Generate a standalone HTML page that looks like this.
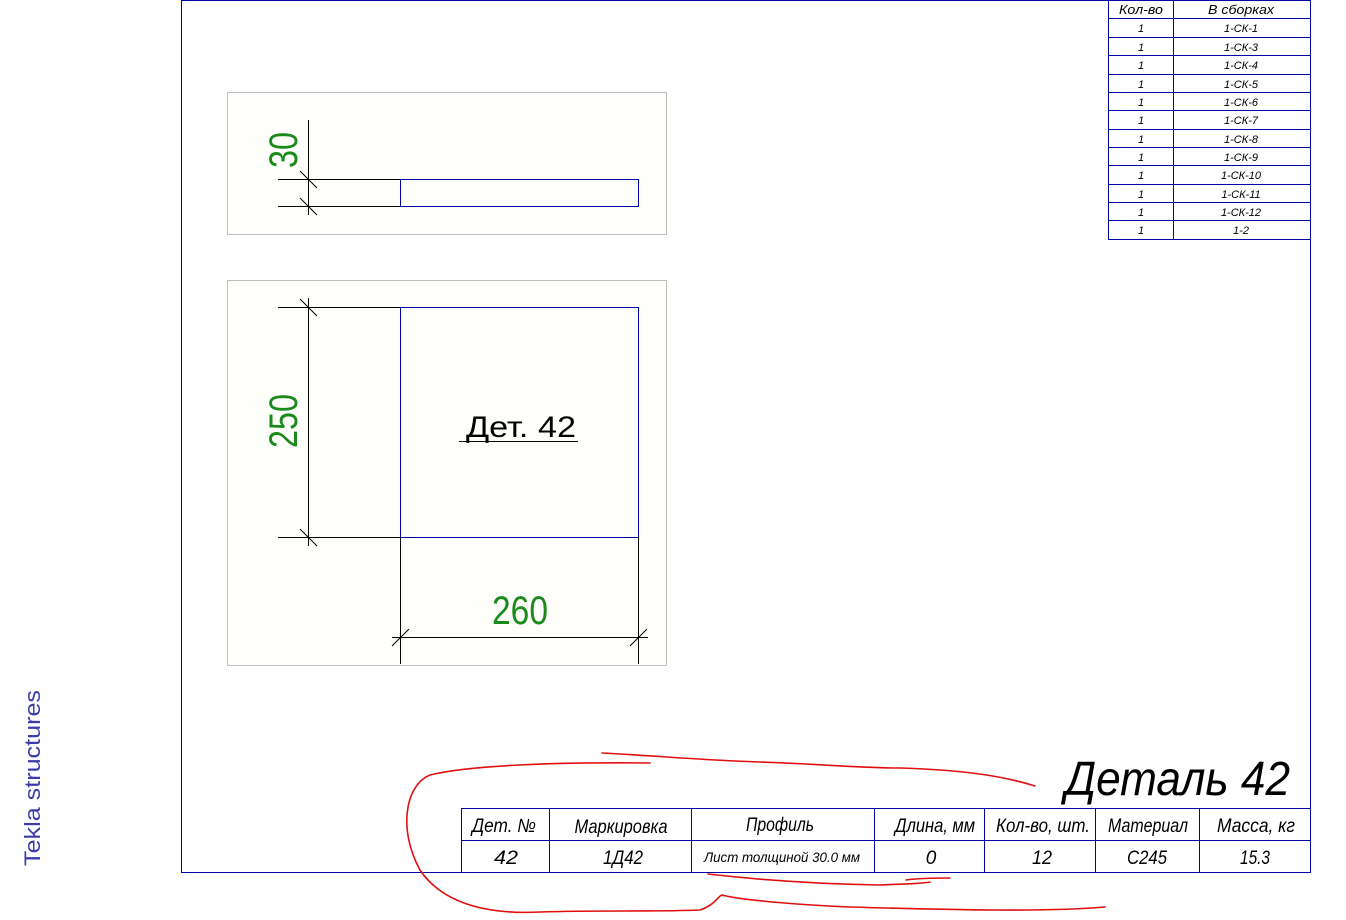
<!DOCTYPE html>
<html><head><meta charset="utf-8"><style>
html,body{margin:0;padding:0;background:#fff;width:1346px;height:920px;overflow:hidden}
svg{display:block}
text{font-family:"Liberation Sans",sans-serif}
.i{font-style:italic}
</style></head><body>
<svg width="1346" height="920" viewBox="0 0 1346 920" xmlns="http://www.w3.org/2000/svg">
<rect width="1346" height="920" fill="#fff"/>
<!-- frame -->
<rect x="181.5" y="0.5" width="1129" height="872" fill="none" stroke="#0000a8" stroke-width="1"/>
<!-- right table -->
<g stroke="#0000a8" stroke-width="1" fill="none">
<line x1="1108.5" y1="0" x2="1108.5" y2="239.5"/>
<line x1="1173.5" y1="0" x2="1173.5" y2="239.5"/>
<line x1="1108" y1="18.5" x2="1310" y2="18.5"/><line x1="1108" y1="37.5" x2="1310" y2="37.5"/>
<line x1="1108" y1="55.5" x2="1310" y2="55.5"/><line x1="1108" y1="74.5" x2="1310" y2="74.5"/>
<line x1="1108" y1="92.5" x2="1310" y2="92.5"/><line x1="1108" y1="110.5" x2="1310" y2="110.5"/>
<line x1="1108" y1="129.5" x2="1310" y2="129.5"/><line x1="1108" y1="147.5" x2="1310" y2="147.5"/>
<line x1="1108" y1="165.5" x2="1310" y2="165.5"/><line x1="1108" y1="184.5" x2="1310" y2="184.5"/>
<line x1="1108" y1="202.5" x2="1310" y2="202.5"/><line x1="1108" y1="220.5" x2="1310" y2="220.5"/>
<line x1="1108" y1="239.5" x2="1310" y2="239.5"/>
</g>
<g class="i" font-size="13" fill="#000" text-anchor="middle" font-style="italic">
<text x="1141" y="14" textLength="44" lengthAdjust="spacingAndGlyphs">Кол-во</text>
<text x="1241" y="14" textLength="66" lengthAdjust="spacingAndGlyphs">В сборках</text>
</g>
<g font-size="11" fill="#000" text-anchor="middle" font-style="italic">
<text x="1141" y="32">1</text><text x="1241" y="32">1-СК-1</text>
<text x="1141" y="51">1</text><text x="1241" y="51">1-СК-3</text>
<text x="1141" y="69">1</text><text x="1241" y="69">1-СК-4</text>
<text x="1141" y="88">1</text><text x="1241" y="88">1-СК-5</text>
<text x="1141" y="106">1</text><text x="1241" y="106">1-СК-6</text>
<text x="1141" y="124">1</text><text x="1241" y="124">1-СК-7</text>
<text x="1141" y="143">1</text><text x="1241" y="143">1-СК-8</text>
<text x="1141" y="161">1</text><text x="1241" y="161">1-СК-9</text>
<text x="1141" y="179">1</text><text x="1241" y="179">1-СК-10</text>
<text x="1141" y="198">1</text><text x="1241" y="198">1-СК-11</text>
<text x="1141" y="216">1</text><text x="1241" y="216">1-СК-12</text>
<text x="1141" y="234">1</text><text x="1241" y="234">1-2</text>
</g>
<!-- view 1 -->
<rect x="227.5" y="92.5" width="439" height="142" fill="#fefefb" stroke="#c0c0c0"/>
<rect x="400.5" y="179.5" width="238" height="27" fill="none" stroke="#0000a8"/>
<g stroke="#000" stroke-width="1">
<line x1="278" y1="179.5" x2="400" y2="179.5"/><line x1="278" y1="206.5" x2="400" y2="206.5"/>
<line x1="308.5" y1="120" x2="308.5" y2="215"/>
<line x1="300" y1="171" x2="317" y2="188"/><line x1="300" y1="198" x2="317" y2="215"/>
</g>
<text x="297" y="150" font-size="40" fill="#1a8a1a" text-anchor="middle" transform="rotate(-90 297 150)" textLength="36" lengthAdjust="spacingAndGlyphs">30</text>
<!-- view 2 -->
<rect x="227.5" y="280.5" width="439" height="385" fill="#fefefb" stroke="#c0c0c0"/>
<rect x="400.5" y="307.5" width="238" height="230" fill="none" stroke="#0000a8"/>
<g stroke="#000" stroke-width="1">
<line x1="278" y1="307.5" x2="400" y2="307.5"/><line x1="278" y1="537.5" x2="400" y2="537.5"/>
<line x1="308.5" y1="298" x2="308.5" y2="546"/>
<line x1="300" y1="299" x2="317" y2="316"/><line x1="300" y1="529" x2="317" y2="546"/>
<line x1="400.5" y1="537" x2="400.5" y2="664"/><line x1="638.5" y1="537" x2="638.5" y2="664"/>
<line x1="392" y1="637.5" x2="648" y2="637.5"/>
<line x1="392" y1="646" x2="409" y2="629"/><line x1="630" y1="646" x2="647" y2="629"/>
<line x1="459" y1="441.5" x2="578" y2="441.5"/>
</g>
<text x="297" y="421" font-size="40" fill="#1a8a1a" text-anchor="middle" transform="rotate(-90 297 421)" textLength="54" lengthAdjust="spacingAndGlyphs">250</text>
<text x="520" y="624" font-size="40" fill="#1a8a1a" text-anchor="middle" textLength="56" lengthAdjust="spacingAndGlyphs">260</text>
<text x="466" y="437" font-size="30" fill="#000" textLength="110" lengthAdjust="spacingAndGlyphs">Дет.  42</text>
<!-- title -->
<text x="1065" y="795" font-size="48" fill="#000" font-style="italic" textLength="225" lengthAdjust="spacingAndGlyphs">Деталь 42</text>
<!-- bottom table -->
<g stroke="#0000a8" stroke-width="1" fill="none">
<line x1="461.5" y1="808.5" x2="1310" y2="808.5"/>
<line x1="461.5" y1="840.5" x2="1310" y2="840.5"/>
<line x1="461.5" y1="808" x2="461.5" y2="872"/>
<line x1="549.5" y1="808" x2="549.5" y2="872"/>
<line x1="691.5" y1="808" x2="691.5" y2="872"/>
<line x1="874.5" y1="808" x2="874.5" y2="872"/>
<line x1="984.5" y1="808" x2="984.5" y2="872"/>
<line x1="1095.5" y1="808" x2="1095.5" y2="872"/>
<line x1="1199.5" y1="808" x2="1199.5" y2="872"/>
</g>
<g font-size="19" fill="#000" text-anchor="middle" font-style="italic">
<text x="504" y="832" textLength="64" lengthAdjust="spacingAndGlyphs">Дет. №</text>
<text x="621" y="833" textLength="93" lengthAdjust="spacingAndGlyphs">Маркировка</text>
<text x="780" y="831" textLength="68" lengthAdjust="spacingAndGlyphs">Профиль</text>
<text x="935" y="832" textLength="80" lengthAdjust="spacingAndGlyphs">Длина, мм</text>
<text x="1043" y="832" textLength="94" lengthAdjust="spacingAndGlyphs">Кол-во, шт.</text>
<text x="1148" y="832" textLength="80" lengthAdjust="spacingAndGlyphs">Материал</text>
<text x="1256" y="832" textLength="78" lengthAdjust="spacingAndGlyphs">Масса, кг</text>
<text x="506" y="864" textLength="24" lengthAdjust="spacingAndGlyphs">42</text>
<text x="623" y="864" textLength="40" lengthAdjust="spacingAndGlyphs">1Д42</text>
<text x="782" y="862" font-size="14" textLength="156" lengthAdjust="spacingAndGlyphs">Лист толщиной 30.0 мм</text>
<text x="931" y="864">0</text>
<text x="1042" y="864" textLength="20" lengthAdjust="spacingAndGlyphs">12</text>
<text x="1147" y="864" textLength="40" lengthAdjust="spacingAndGlyphs">С245</text>
<text x="1255" y="864" textLength="30" lengthAdjust="spacingAndGlyphs">15.3</text>
</g>
<!-- red scribbles -->
<g stroke="#e01010" stroke-width="1.6" fill="none" stroke-linecap="round">
<path d="M602 753 C660 756 700 760 760 762 C820 764 860 768 900 768 C960 770 1000 775 1035 786"/>
<path d="M650 763 C560 762 470 765 430 775 C405 785 398 830 420 870 C440 900 480 915 540 912 C600 910 650 912 700 910 C715 905 718 896 722 895 C740 900 800 905 850 907 C950 910 1050 912 1105 907"/>
<path d="M708 874 C760 880 820 884 880 885 C900 884 920 884 930 882"/>
<path d="M906 880 C920 878 940 878 950 878"/>
</g>
<!-- Tekla -->
<text x="40" y="866" font-size="22" fill="#3c3ca8" transform="rotate(-90 40 866)" textLength="176" lengthAdjust="spacingAndGlyphs">Tekla structures</text>
</svg>
</body></html>
